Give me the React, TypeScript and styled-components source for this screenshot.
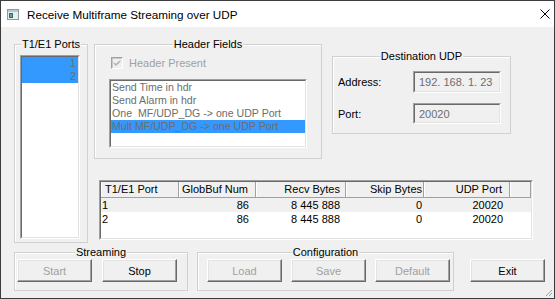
import React from "react";
import styled, { createGlobalStyle } from "styled-components";

const GlobalStyle = createGlobalStyle`
  html, body {
    margin: 0;
    padding: 0;
    background: #ffffff;
  }
  body {
    font-family: "Liberation Sans", Arial, sans-serif;
    font-size: 11px;
    color: #000;
  }
  * {
    box-sizing: border-box;
  }
`;

const Window = styled.div`
  width: 555px;
  height: 299px;
  border: 1px solid #3c3c3c;
  background: #f0f0f0;
  display: flex;
  flex-direction: column;
  position: relative;
  overflow: hidden;
`;

const TitleBar = styled.div`
  height: 26px;
  flex: none;
  background: #ffffff;
  display: flex;
  align-items: center;
  padding-left: 6px;
`;

const Title = styled.span`
  margin-left: 8px;
  font-size: 11.7px;
  color: #000;
`;

const CloseBox = styled.div`
  margin-left: auto;
  margin-right: 4px;
  width: 10px;
  height: 10px;
  display: flex;
`;

const Client = styled.div`
  flex: 1;
  padding: 17px 0 0 13px;
  display: flex;
  flex-direction: column;
`;

const TopArea = styled.div`
  display: flex;
  height: 199px;
`;

const RightCol = styled.div`
  margin-left: 6px;
  display: flex;
  flex-direction: column;
`;

const TopRow = styled.div`
  display: flex;
  align-items: flex-start;
`;

const BottomRow = styled.div`
  display: flex;
  align-items: flex-start;
  margin-top: 9px;
`;

const Group = styled.div<{ $w: number; $h: number; $mt?: number; $ml?: number }>`
  position: relative;
  flex: none;
  width: ${(p) => p.$w}px;
  height: ${(p) => p.$h}px;
  margin: ${(p) => p.$mt ?? 0}px 0 0 ${(p) => p.$ml ?? 0}px;
  border: 1px solid #d0d0d0;
  box-shadow: inset 1px 1px 0 #ffffff;
`;

const Caption = styled.span`
  position: absolute;
  top: -7px;
  left: 50%;
  transform: translateX(-50%);
  padding: 0 1px;
  background: #f0f0f0;
  line-height: 13px;
  white-space: nowrap;
`;

const PortsBody = styled.div`
  padding: 10px 0 0 5px;
`;

const HeaderBody = styled.div`
  display: flex;
  flex-direction: column;
  padding: 12px 0 0 15px;
`;

const DestBody = styled.div`
  display: grid;
  grid-template-columns: 75px 88px;
  grid-template-rows: 22px 21px;
  row-gap: 10px;
  align-items: center;
  padding: 14px 0 0 5px;
`;

const Sunken = styled.div<{ $w: number; $h: number; $mt?: number; $ml?: number }>`
  width: ${(p) => p.$w}px;
  height: ${(p) => p.$h}px;
  margin: ${(p) => p.$mt ?? 0}px 0 0 ${(p) => p.$ml ?? 0}px;
  border: 1px solid;
  border-color: #a0a0a0 #ffffff #ffffff #a0a0a0;
  flex: none;
`;

const SunkenInner = styled.div<{ $bg?: string }>`
  width: 100%;
  height: 100%;
  border: 1px solid;
  border-color: #696969 #e3e3e3 #e3e3e3 #696969;
  background: ${(p) => p.$bg ?? "#ffffff"};
  overflow: hidden;
`;

const ListItem = styled.div<{ $sel?: boolean; $right?: boolean }>`
  height: 13px;
  line-height: 13px;
  padding: 0 2px 0 1px;
  white-space: pre;
  color: #6d6d6d;
  font-size: 10.6px;
  text-align: ${(p) => (p.$right ? "right" : "left")};
  background: ${(p) => (p.$sel ? "#3399ff" : "transparent")};
`;

const CheckRow = styled.label`
  display: flex;
  align-items: center;
  height: 12px;
  margin-left: 1px;
  color: #a0a0a0;
  gap: 6px;
`;

const CheckBox = styled.span`
  width: 12px;
  height: 12px;
  border: 1px solid;
  border-color: #a0a0a0 #ffffff #ffffff #a0a0a0;
  box-shadow: inset 1px 1px 0 #c8c8c8;
  background: #f0f0f0;
  display: flex;
  align-items: center;
  justify-content: center;
`;

const FieldLabel = styled.span`
  color: #000;
`;

const FieldText = styled.div`
  padding-left: 4px;
  line-height: 18px;
  color: #6d6d6d;
  white-space: pre;
`;

const TableWrap = styled.div`
  margin: 21px 0 0 5px;
`;

const HeadRow = styled.div`
  display: flex;
  height: 16px;
  background: #f0f0f0;
  border-bottom: 1px solid #a0a0a0;
`;

const HeadCell = styled.div<{ $w?: number; $right?: boolean; $pad: number }>`
  flex: ${(p) => (p.$w ? `0 0 ${p.$w}px` : "1")};
  line-height: 15px;
  border-right: 1px solid #a0a0a0;
  box-shadow: inset 1px 0 0 #ffffff;
  text-align: ${(p) => (p.$right ? "right" : "left")};
  padding: ${(p) => (p.$right ? `0 ${p.$pad}px 0 0` : `0 0 0 ${p.$pad}px`)};
  white-space: nowrap;
  overflow: hidden;
`;

const Row = styled.div<{ $alt?: boolean }>`
  display: flex;
  height: 14px;
  background: ${(p) => (p.$alt ? "#f0f0f0" : "#ffffff")};
`;

const Cell = styled.div<{ $w?: number; $right?: boolean; $pad: number }>`
  flex: ${(p) => (p.$w ? `0 0 ${p.$w}px` : "1")};
  line-height: 14px;
  text-align: ${(p) => (p.$right ? "right" : "left")};
  padding: ${(p) => (p.$right ? `0 ${p.$pad}px 0 0` : `0 0 0 ${p.$pad}px`)};
  white-space: nowrap;
`;

const ButtonRow = styled.div<{ $pl: number; $gap: number }>`
  display: flex;
  gap: ${(p) => p.$gap}px;
  padding: 6px 0 0 ${(p) => p.$pl}px;
`;

const Button = styled.button<{ $mt?: number; $ml?: number }>`
  width: 75px;
  height: 23px;
  flex: none;
  margin: ${(p) => p.$mt ?? 0}px 0 0 ${(p) => p.$ml ?? 0}px;
  padding: 0;
  font-family: "Liberation Sans", Arial, sans-serif;
  font-size: 11px;
  color: #000;
  background: #f0f0f0;
  border: 1px solid;
  border-color: #ffffff #696969 #696969 #ffffff;
  box-shadow: inset -1px -1px 0 #a0a0a0, inset 1px 1px 0 #e3e3e3;

  &:disabled {
    color: #a0a0a0;
  }
`;

const Grip = styled.svg`
  position: absolute;
  right: 1px;
  bottom: 1px;
`;

const ports = ["1", "2"];
const headerFields = [
  "Send Time in hdr",
  "Send Alarm in hdr",
  "One  MF/UDP_DG -> one UDP Port",
  "Mult MF/UDP_DG -> one UDP Port",
];

const columns = [
  { title: "T1/E1 Port", w: 78, right: false, pad: 4, bodyPad: 1 },
  { title: "GlobBuf Num", w: 77, right: true, pad: 7, bodyPad: 7 },
  { title: "Recv Bytes", w: 90, right: true, pad: 5, bodyPad: 6 },
  { title: "Skip Bytes", w: 78, right: true, pad: 1, bodyPad: 2 },
  { title: "UDP Port", w: 86, right: true, pad: 7, bodyPad: 7 },
];

const rows = [
  ["1", "86", "8 445 888", "0", "20020"],
  ["2", "86", "8 445 888", "0", "20020"],
];

const AppIcon = () => (
  <svg width="12" height="11" viewBox="0 0 12 11">
    <rect x="0.5" y="0.5" width="11" height="10" fill="#e8eef0" stroke="#8a9aa0" />
    <rect x="1" y="1" width="10" height="2" fill="#b9c8cf" />
    <rect x="2" y="4" width="4" height="5" fill="#2f6f6a" />
    <rect x="3" y="5" width="2" height="3" fill="#5fa39a" />
  </svg>
);

const CheckMark = () => (
  <svg width="8" height="8" viewBox="0 0 8 8">
    <path d="M1 3.5 L3 5.5 L7 1.5 M1 4.5 L3 6.5 L7 2.5" fill="none" stroke="#a0a0a0" strokeWidth="1" />
  </svg>
);

export default function App() {
  return (
    <>
      <GlobalStyle />
      <Window>
        <TitleBar>
          <AppIcon />
          <Title>Receive Multiframe Streaming over UDP</Title>
          <CloseBox>
            <svg width="10" height="10" viewBox="0 0 10 10">
              <path d="M0.5 0.5 L9.5 9.5 M9.5 0.5 L0.5 9.5" stroke="#000" strokeWidth="1" />
            </svg>
          </CloseBox>
        </TitleBar>

        <Client>
          <TopArea>
            <Group $w={74} $h={199}>
              <Caption>T1/E1 Ports</Caption>
              <PortsBody>
                <Sunken $w={60} $h={184}>
                  <SunkenInner>
                    {ports.map((p) => (
                      <ListItem key={p} $sel $right>
                        {p}
                      </ListItem>
                    ))}
                  </SunkenInner>
                </Sunken>
              </PortsBody>
            </Group>

            <RightCol>
              <TopRow>
                <Group $w={228} $h={115}>
                  <Caption>Header Fields</Caption>
                  <HeaderBody>
                    <CheckRow>
                      <CheckBox>
                        <CheckMark />
                      </CheckBox>
                      Header Present
                    </CheckRow>
                    <Sunken $w={198} $h={69} $mt={10} $ml={-1}>
                      <SunkenInner>
                        {headerFields.map((f, i) => (
                          <ListItem key={f} $sel={i === 3}>
                            {f}
                          </ListItem>
                        ))}
                      </SunkenInner>
                    </Sunken>
                  </HeaderBody>
                </Group>

                <Group $w={179} $h={78} $ml={10} $mt={12}>
                  <Caption>Destination UDP</Caption>
                  <DestBody>
                    <FieldLabel>Address:</FieldLabel>
                    <Sunken $w={88} $h={22}>
                      <SunkenInner $bg="#f0f0f0">
                        <FieldText>{"192. 168. 1. 23"}</FieldText>
                      </SunkenInner>
                    </Sunken>
                    <FieldLabel>Port:</FieldLabel>
                    <Sunken $w={88} $h={21}>
                      <SunkenInner $bg="#f0f0f0">
                        <FieldText>20020</FieldText>
                      </SunkenInner>
                    </Sunken>
                  </DestBody>
                </Group>
              </TopRow>

              <TableWrap>
                <Sunken $w={434} $h={60}>
                  <SunkenInner>
                    <HeadRow>
                      {columns.map((c) => (
                        <HeadCell key={c.title} $w={c.w} $right={c.right} $pad={c.pad}>
                          {c.title}
                        </HeadCell>
                      ))}
                      <HeadCell $pad={0} />
                    </HeadRow>
                    {rows.map((r, i) => (
                      <Row key={i} $alt={i === 0}>
                        {r.map((v, j) => (
                          <Cell
                            key={j}
                            $w={columns[j].w}
                            $right={columns[j].right}
                            $pad={columns[j].bodyPad}
                          >
                            {v}
                          </Cell>
                        ))}
                        <Cell $pad={0} />
                      </Row>
                    ))}
                  </SunkenInner>
                </Sunken>
              </TableWrap>
            </RightCol>
          </TopArea>

          <BottomRow>
            <Group $w={174} $h={39}>
              <Caption>Streaming</Caption>
              <ButtonRow $pl={2} $gap={10}>
                <Button disabled>Start</Button>
                <Button>Stop</Button>
              </ButtonRow>
            </Group>
            <Group $w={257} $h={39} $ml={9}>
              <Caption>Configuration</Caption>
              <ButtonRow $pl={9} $gap={9}>
                <Button disabled>Load</Button>
                <Button disabled>Save</Button>
                <Button disabled>Default</Button>
              </ButtonRow>
            </Group>
            <Button $mt={7} $ml={16}>
              Exit
            </Button>
          </BottomRow>
        </Client>

        <Grip width="10" height="10" viewBox="0 0 10 10">
          <path d="M9 3 L3 9 M9 6 L6 9" stroke="#a0a0a0" strokeWidth="1" />
        </Grip>
      </Window>
    </>
  );
}
